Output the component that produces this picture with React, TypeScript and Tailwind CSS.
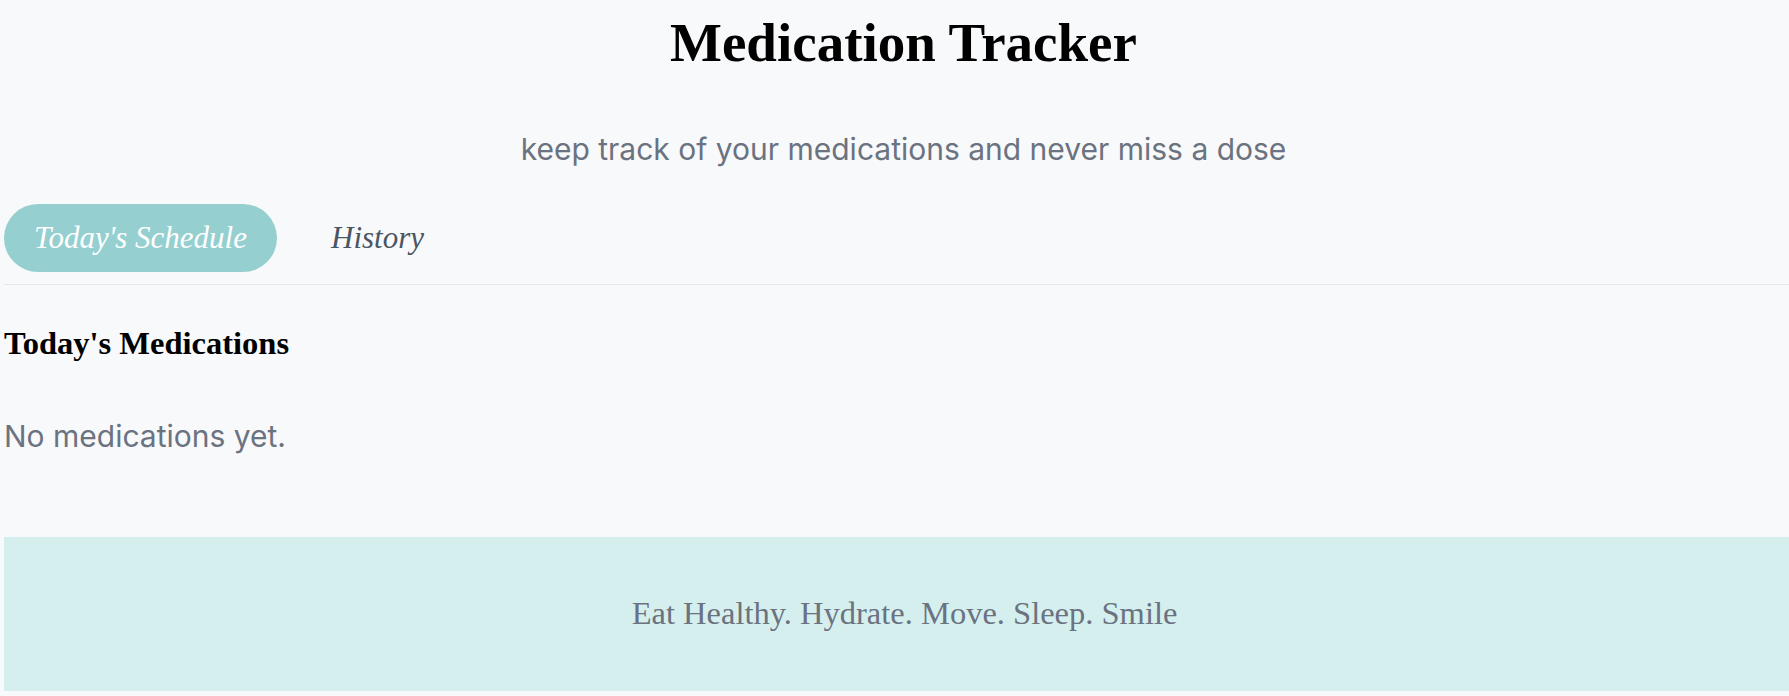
import { useState } from "react";

const serif = { fontFamily: '"Liberation Serif", "Times New Roman", serif' };
const sans = { fontFamily: 'Inter, "Liberation Sans", sans-serif' };

const App = () => {
  const [tab, setTab] = useState<"today" | "history">("today");

  return (
    <div className="min-h-screen bg-[#f8f9fb] pl-1 pb-1" style={sans}>
      <header className="pl-[14px] text-center">
        <h1 className="pt-[13px] text-[55px] leading-[60px] font-bold text-black" style={serif}>
          Medication Tracker
        </h1>
        <p className="mt-[56px] text-[30px] leading-[40px] text-[#6b7280]">
          keep track of your medications and never miss a dose
        </p>
      </header>

      <nav className="mt-[35px] flex items-center gap-[24px] border-b border-[#e5e7eb] pb-3">
        <button
          onClick={() => setTab("today")}
          className={
            tab === "today"
              ? "rounded-[34px] bg-[#96cfd0] px-[30px] py-[14px] text-[31px] leading-[40px] italic text-white"
              : "rounded-[34px] px-[30px] py-[14px] text-[31px] leading-[40px] italic text-[#4b5563]"
          }
          style={serif}
        >
          Today's Schedule
        </button>
        <button
          onClick={() => setTab("history")}
          className={
            tab === "history"
              ? "rounded-[34px] bg-[#96cfd0] px-[30px] py-[14px] text-[31px] leading-[40px] italic text-white"
              : "rounded-[34px] px-[30px] py-[14px] text-[31px] leading-[40px] italic text-[#4b5563]"
          }
          style={serif}
        >
          History
        </button>
      </nav>

      <section className="pt-[38px]">
        <h2 className="text-[32.5px] leading-[40px] font-bold text-black" style={serif}>
          {tab === "today" ? "Today's Medications" : "History"}
        </h2>
        <p className="mt-[53px] text-[30px] leading-[40px] text-[#6b7280]">No medications yet.</p>
      </section>

      <footer className="mt-[81px] bg-[#d5efef] pl-[16px] pt-[56px] pb-[58px] text-center">
        <p className="text-[32.5px] leading-[40px] text-[#6b7280]" style={serif}>
          Eat Healthy. Hydrate. Move. Sleep. Smile
        </p>
      </footer>
    </div>
  );
};

export default App;
